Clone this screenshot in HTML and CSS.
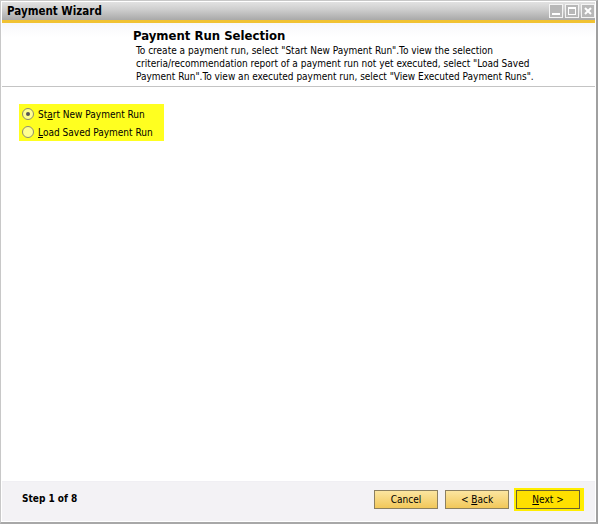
FILE: index.html
```html
<!DOCTYPE html>
<html lang="en">
<head>
    <meta charset="UTF-8">
    <title>Payment Wizard</title>
    <link rel="stylesheet" href="styles.css">
</head>
<body>
    <div class="window">
        <div class="titlebar">
            <span class="title">Payment Wizard</span>
            <div class="win-btns">
                <span class="win-btn"><svg width="12" height="12" viewBox="0 0 12 12"><rect x="2" y="8" width="8" height="2" fill="#fff"/></svg></span>
                <span class="win-btn"><svg width="12" height="12" viewBox="0 0 12 12"><rect x="2.5" y="2.5" width="7" height="7" fill="none" stroke="#fff"/><rect x="2" y="2" width="8" height="2" fill="#fff"/></svg></span>
                <span class="win-btn"><svg width="12" height="12" viewBox="0 0 12 12"><path d="M3 3 L9 9 M9 3 L3 9" stroke="#fff" stroke-width="2"/></svg></span>
            </div>
        </div>

        <div class="header">
            <h1>Payment Run Selection</h1>
            <p>To create a payment run, select "Start New Payment Run".To view the selection criteria/recommendation report of a payment run not yet executed, select "Load Saved Payment Run".To view an executed payment run, select "View Executed Payment Runs".</p>
        </div>

        <div class="content">
            <div class="options">
                <label class="option"><span class="radio checked"></span>St<u>a</u>rt New Payment Run</label>
                <label class="option"><span class="radio"></span><u>L</u>oad Saved Payment Run</label>
            </div>
        </div>

        <div class="footer">
            <span class="step">Step 1 of 8</span>
            <div class="buttons">
                <button class="btn">Cancel</button>
                <button class="btn">&lt; <u>B</u>ack</button>
                <span class="btn-focus"><button class="btn btn-next"><u>N</u>ext &gt;</button></span>
            </div>
        </div>
    </div>
</body>
</html>
```

FILE: styles.css
```css
body {
    margin: 0;
    font-family: "DejaVu Sans Condensed", "DejaVu Sans", Tahoma, sans-serif;
    font-size: 11px;
    color: #000;
    background: #fff;
}

.window {
    width: 593px;
    height: 519px;
    border: 1px solid #c8c8c8;
    border-right: 2px solid #a0a0a0;
    border-bottom: 2px solid #a8a8a8;
    padding: 1px;
    display: flex;
    flex-direction: column;
    background: #fff;
}

.titlebar {
    height: 18px;
    display: flex;
    align-items: center;
    justify-content: space-between;
    background: linear-gradient(#e2e2e2, #cfcfcf 40%, #a9a9a9);
    border-bottom: 3px solid #f1c232;
    padding: 0 0 0 5px;
}

.title {
    font-weight: bold;
    font-size: 11.5px;
    color: #000;
}

.win-btns {
    display: flex;
    gap: 2px;
}

.win-btn {
    width: 12px;
    height: 12px;
    border: 1px solid #f4f4f4;
    background: #b8b8b8;
    display: flex;
}

.header {
    height: 58px;
    border-bottom: 1px solid #c4c4c4;
    padding: 5px 0 0 131px;
    background: linear-gradient(#f7f7f9, #fff 14px);
}

.header h1 {
    margin: 0;
    font-size: 13px;
    font-weight: bold;
    line-height: 15px;
}

.header p {
    margin: 1px 0 0 3px;
    width: 420px;
    line-height: 13px;
    font-size: 10px;
}

.content {
    flex: 1;
    padding: 17px 0 0 17px;
    border-bottom: 1px solid #f0eff3;
}

.options {
    display: inline-flex;
    flex-direction: column;
    background: #ffff20;
    padding: 3px 11px 2px 3px;
    gap: 4px;
}

.option {
    display: flex;
    align-items: center;
    height: 14px;
    font-size: 10px;
}

.radio {
    width: 10px;
    height: 10px;
    border: 1px solid #8c8c70;
    border-radius: 50%;
    background: #ffff90;
    margin-right: 4px;
    position: relative;
}

.radio.checked::after {
    content: "";
    position: absolute;
    left: 3px;
    top: 3px;
    width: 4px;
    height: 4px;
    border-radius: 50%;
    background: #555;
}

.footer {
    height: 31px;
    background: #f3f2f5;
    display: flex;
    align-items: flex-start;
    justify-content: space-between;
    padding: 8px 11px 0 20px;
}

.step {
    font-weight: bold;
    font-size: 10px;
    line-height: 18px;
}

.buttons {
    display: flex;
    align-items: center;
    gap: 5px;
    margin-top: -2px;
}

.btn {
    width: 64px;
    height: 19px;
    font-family: "DejaVu Sans Condensed", "DejaVu Sans", Tahoma, sans-serif;
    font-size: 10px;
    border: 1px solid #8c8060;
    background: linear-gradient(#fbe5a0, #f2c85a);
    padding: 0;
    color: #000;
}

.btn:first-child {
    margin-right: 2px;
}

.btn-focus {
    background: #ffee00;
    padding: 2px;
    display: flex;
}

.btn-next {
    background: #ffe000;
    border-color: #6a6030;
}
```
